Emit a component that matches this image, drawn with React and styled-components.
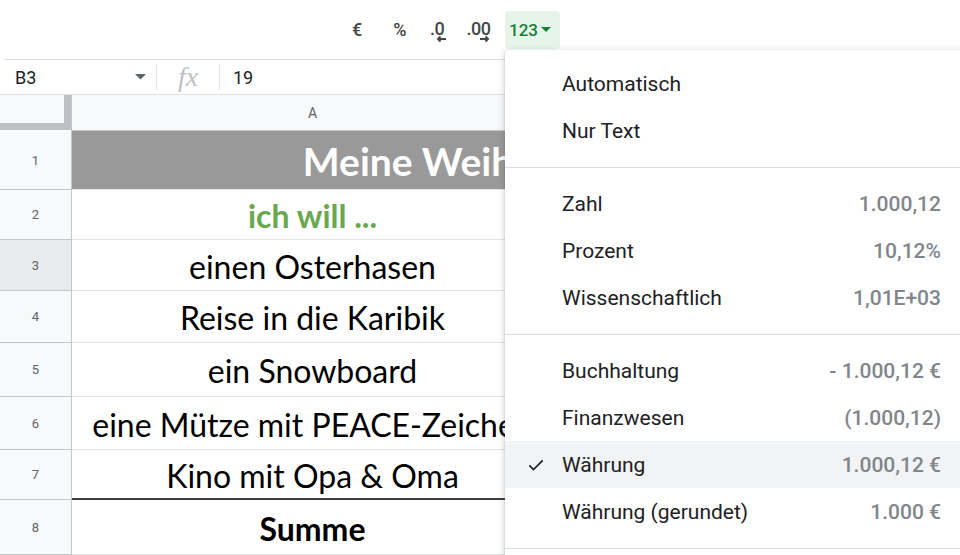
import styled, { createGlobalStyle } from 'styled-components';

const GlobalStyle = createGlobalStyle`
  html, body {
    margin: 0;
    padding: 0;
    background: #fff;
  }
  body {
    font-family: Roboto, "Liberation Sans", Arial, sans-serif;
    color: #202124;
  }
`;

const Page = styled.div`
  position: relative;
  width: 960px;
  height: 555px;
  overflow: hidden;
  background: #fff;
`;

const Toolbar = styled.div`
  display: flex;
  align-items: center;
  height: 59px;
  margin-left: 4px;
  padding-left: 332px;
  border-bottom: 1px solid #dadce0;
  box-sizing: content-box;
`;

const ToolButton = styled.div`
  position: relative;
  display: flex;
  align-items: center;
  justify-content: center;
  width: ${(p) => p.w}px;
  height: 38px;
  color: #444746;
  font-size: 18px;
  font-weight: 500;
`;

const DecimalText = styled.span`
  display: flex;
  flex-direction: column;
  align-items: flex-end;
  line-height: 17px;
  letter-spacing: -0.5px;
  margin-top: 4px;

  svg {
    margin-top: -2px;
    margin-right: ${(p) => p.arrowShift || 0}px;
  }
`;

const FormatButton = styled.div`
  display: flex;
  align-items: center;
  gap: 3px;
  width: 55px;
  height: 38px;
  padding-left: 4px;
  box-sizing: border-box;
  border-radius: 4px;
  background: #e6f4ea;
  color: #188038;
  font-size: 17px;
  font-weight: 500;
`;

const FormulaBar = styled.div`
  display: flex;
  align-items: center;
  height: 34px;
  border-bottom: 1px solid #e1e3e1;
  font-size: 18px;
`;

const NameBox = styled.div`
  display: flex;
  align-items: center;
  justify-content: space-between;
  width: 157px;
  padding: 0 10px 0 15px;
  box-sizing: border-box;
  border-right: 1px solid #e1e3e1;
  height: 26px;
`;

const FxBox = styled.div`
  width: 62px;
  height: 26px;
  display: flex;
  align-items: center;
  justify-content: center;
  border-right: 1px solid #e1e3e1;
  font-family: "Liberation Serif", "DejaVu Serif", serif;
  font-style: italic;
  font-size: 28px;
  color: #bdc1c6;
`;

const FormulaValue = styled.div`
  padding-left: 13px;
`;

/* the grid only shows up to the left edge of the open format menu */
const Sheet = styled.div`
  display: flex;
  flex-direction: column;
  width: 505px;
  overflow: hidden;
`;

const Row = styled.div`
  display: flex;
  height: ${(p) => p.h}px;
`;

const Corner = styled.div`
  width: 64px;
  flex: none;
  background: #f8f9fa;
  border-right: 7px solid #bdc1c6;
  border-bottom: 7px solid #bdc1c6;
  box-sizing: content-box;
  height: 28px;
`;

const ColHeader = styled.div`
  width: ${(p) => p.w}px;
  flex: none;
  display: flex;
  align-items: center;
  justify-content: center;
  background: #f8f9fa;
  border-left: 1px solid #c4c7c5;
  border-bottom: 1px solid #c4c7c5;
  font-size: 14px;
  color: #5f6368;
`;

const RowHeader = styled.div`
  width: 71px;
  flex: none;
  display: flex;
  align-items: center;
  justify-content: center;
  background: ${(p) => (p.selected ? '#e8eaed' : '#f8f9fa')};
  border-right: 1px solid #c4c7c5;
  border-bottom: 1px solid #c4c7c5;
  font-size: 13px;
  color: #5f6368;
`;

const Cell = styled.div`
  width: ${(p) => p.w}px;
  flex: none;
  display: flex;
  align-items: center;
  justify-content: center;
  white-space: nowrap;
  overflow: hidden;
  background: ${(p) => (p.title ? '#999999' : '#fff')};
  border-bottom: ${(p) => (p.strong ? '2px solid #3c3c3c' : '1px solid #e2e3e3')};
  font-family: Lato, "Open Sans", sans-serif;
  font-size: ${(p) => (p.title ? 39 : 32)}px;
  font-weight: ${(p) => (p.bold ? 700 : 400)};
  color: ${(p) => p.color || '#000'};
  padding-top: 2px;
  box-sizing: border-box;
`;

const Menu = styled.div`
  position: absolute;
  left: 505px;
  top: 50px;
  width: 470px;
  padding: 10px 0;
  background: #fff;
  border-radius: 4px;
  box-shadow: 0 2px 6px 2px rgba(60, 64, 67, 0.15), 0 1px 2px rgba(60, 64, 67, 0.3);
  font-family: Roboto, "Liberation Sans", sans-serif;
  font-size: 21px;
`;

const MenuItem = styled.div`
  position: relative;
  display: flex;
  align-items: center;
  justify-content: space-between;
  height: 47px;
  padding: 0 34px 0 57px;
  background: ${(p) => (p.active ? '#f1f3f4' : 'transparent')};
  color: #202124;
`;

const Check = styled.span`
  position: absolute;
  left: 21px;
  top: 14px;
  display: flex;
`;

const Sample = styled.span`
  color: #80868b;
  font-weight: 500;
`;

const Separator = styled.div`
  height: 1px;
  margin: 13px 0 12px;
  background: #dadce0;
`;

const rows = [
  { n: 2, h: 50, text: 'ich will ...', bold: true, color: '#6aa84f' },
  { n: 3, h: 51, text: 'einen Osterhasen', selected: true },
  { n: 4, h: 52, text: 'Reise in die Karibik' },
  { n: 5, h: 54, text: 'ein Snowboard' },
  { n: 6, h: 53, text: 'eine Mütze mit PEACE-Zeichen' },
  { n: 7, h: 50, text: 'Kino mit Opa & Oma', strong: true },
  { n: 8, h: 55, text: 'Summe', bold: true },
];

const formats = [
  [{ label: 'Automatisch' }, { label: 'Nur Text' }],
  [
    { label: 'Zahl', sample: '1.000,12' },
    { label: 'Prozent', sample: '10,12%' },
    { label: 'Wissenschaftlich', sample: '1,01E+03' },
  ],
  [
    { label: 'Buchhaltung', sample: '- 1.000,12 €' },
    { label: 'Finanzwesen', sample: '(1.000,12)' },
    { label: 'Währung', sample: '1.000,12 €', active: true },
    { label: 'Währung (gerundet)', sample: '1.000 €' },
  ],
];

function Arrow({ dir }) {
  const d = dir === 'left' ? 'M11 4H3M5.5 1.5L3 4l2.5 2.5' : 'M1 4h8M6.5 1.5L9 4 6.5 6.5';
  return (
    <svg width="12" height="8" viewBox="0 0 12 8">
      <path d={d} stroke="#444746" strokeWidth="2" fill="none" />
    </svg>
  );
}

function Caret({ color, size = 10 }) {
  return (
    <svg width={size} height={size / 2} viewBox="0 0 10 5">
      <path d="M0 0h10L5 5z" fill={color} />
    </svg>
  );
}

function App() {
  return (
    <Page>
      <GlobalStyle />
      <Toolbar>
        <ToolButton w={42}>€</ToolButton>
        <ToolButton w={44}>%</ToolButton>
        <ToolButton w={30}>
          <DecimalText arrowShift={-3}>
            .0
            <Arrow dir="left" />
          </DecimalText>
        </ToolButton>
        <ToolButton w={53}>
          <DecimalText arrowShift={-1}>
            .00
            <Arrow dir="right" />
          </DecimalText>
        </ToolButton>
        <FormatButton>
          123
          <Caret color="#188038" />
        </FormatButton>
      </Toolbar>

      <FormulaBar>
        <NameBox>
          B3
          <Caret color="#5f6368" size={11} />
        </NameBox>
        <FxBox>fx</FxBox>
        <FormulaValue>19</FormulaValue>
      </FormulaBar>

      <Sheet>
        <Row h={36}>
          <Corner />
          <ColHeader w={481}>A</ColHeader>
        </Row>
        <Row h={59}>
          <RowHeader>1</RowHeader>
          <Cell w={940} title bold color="#fff">
            Meine Weihnachtswünsche
          </Cell>
        </Row>
        {rows.map((r) => (
          <Row key={r.n} h={r.h}>
            <RowHeader selected={r.selected}>{r.n}</RowHeader>
            <Cell w={481} bold={r.bold} color={r.color} strong={r.strong}>
              {r.text}
            </Cell>
          </Row>
        ))}
      </Sheet>

      <Menu>
        {formats.map((group, gi) => (
          <div key={gi}>
            {gi > 0 && <Separator />}
            {group.map((f) => (
              <MenuItem key={f.label} active={f.active}>
                {f.active && (
                  <Check>
                    <svg width="20" height="20" viewBox="0 0 24 24">
                      <path d="M4 12.5l5 5L20 6.5" stroke="#202124" strokeWidth="2" fill="none" />
                    </svg>
                  </Check>
                )}
                <span>{f.label}</span>
                {f.sample && <Sample>{f.sample}</Sample>}
              </MenuItem>
            ))}
          </div>
        ))}
        <Separator />
      </Menu>
    </Page>
  );
}

export default App;
